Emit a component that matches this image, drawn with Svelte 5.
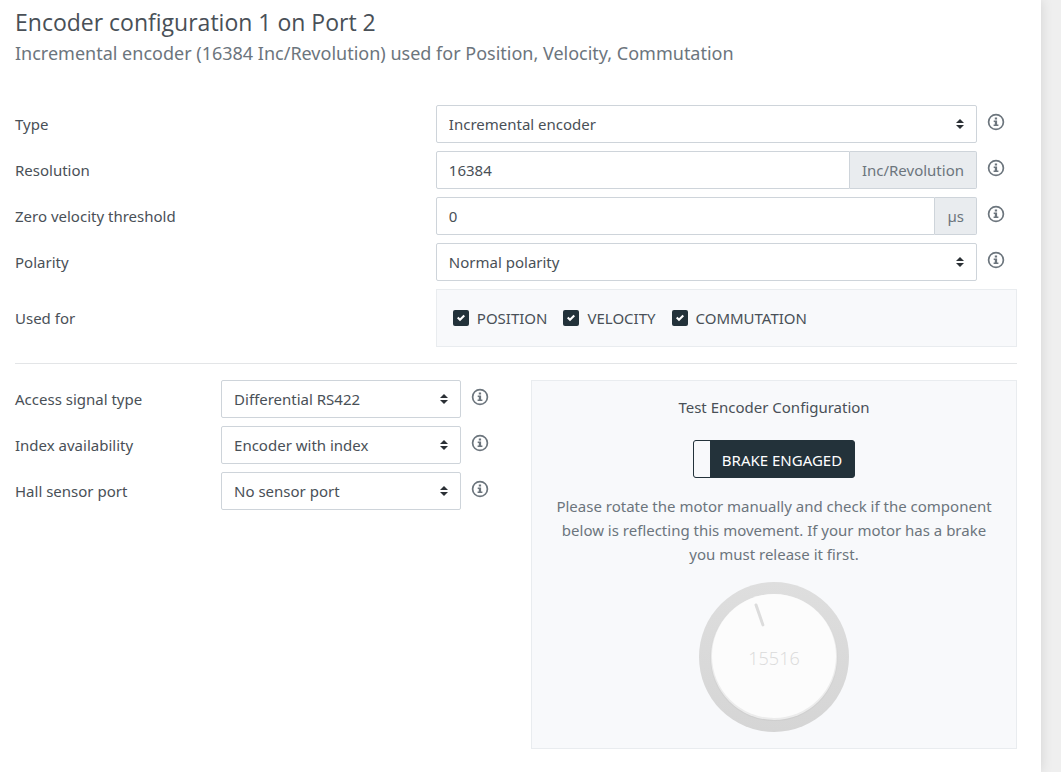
<script>
  const mainFields = [
    { id: 'type', label: 'Type', kind: 'select', value: 'Incremental encoder' },
    { id: 'resolution', label: 'Resolution', kind: 'input', value: '16384', unit: 'Inc/Revolution' },
    { id: 'threshold', label: 'Zero velocity threshold', kind: 'input', value: '0', unit: 'µs' },
    { id: 'polarity', label: 'Polarity', kind: 'select', value: 'Normal polarity' }
  ];
  const signalFields = [
    { id: 'access', label: 'Access signal type', value: 'Differential RS422' },
    { id: 'index', label: 'Index availability', value: 'Encoder with index' },
    { id: 'hall', label: 'Hall sensor port', value: 'No sensor port' }
  ];
  const uses = ['POSITION', 'VELOCITY', 'COMMUTATION'];
  const position = 15516;
  const resolution = 16384;
  const angle = (position / resolution) * 360;
</script>

{#snippet info(label)}
  <button type="button" class="info" aria-label={'About ' + label}>
    <svg viewBox="0 0 18 18" width="18" height="18" fill="none">
      <circle cx="9" cy="9" r="7.4" stroke="currentColor" stroke-width="1.7" />
      <path d="M7.8 4.4h2.3v2.1H7.8zM6.7 7.4h3.4v4.2h1.3v1.5H6.6v-1.5h1.2V8.9H6.7z" fill="currentColor" />
    </svg>
  </button>
{/snippet}

{#snippet dropdown(field)}
  <span class="select">
    <select id={field.id}>
      <option>{field.value}</option>
    </select>
    <svg class="arrows" viewBox="0 0 8 10" width="8" height="10" fill="#2b3035" aria-hidden="true">
      <path d="M0 4 4 0l4 4zM0 6h8l-4 4z" />
    </svg>
  </span>
{/snippet}

<main>
  <header>
    <h1>Encoder configuration 1 on Port 2</h1>
    <p>Incremental encoder (16384 Inc/Revolution) used for Position, Velocity, Commutation</p>
  </header>

  <section class="fields">
    {#each mainFields as field}
      <div class="row">
        <label for={field.id}>{field.label}</label>
        <div class="control">
          {#if field.kind === 'select'}
            {@render dropdown(field)}
          {:else}
            <span class="group">
              <input id={field.id} type="text" value={field.value} />
              <span class="unit">{field.unit}</span>
            </span>
          {/if}
          {@render info(field.label)}
        </div>
      </div>
    {/each}
    <div class="row">
      <span id="used">Used for</span>
      <div class="uses" role="group" aria-labelledby="used">
        {#each uses as use}
          <label class="check">
            <span class="box">
              <input type="checkbox" checked />
              <svg viewBox="0 0 8 8" width="8" height="8" aria-hidden="true">
                <path fill="#fff" d="M6.564.75l-3.59 3.612-1.538-1.55L0 4.26l2.974 2.99L8 2.193z" />
              </svg>
            </span>
            {use}
          </label>
        {/each}
      </div>
    </div>
  </section>

  <hr />

  <div class="lower">
    <section class="fields">
      {#each signalFields as field}
        <div class="row signal">
          <label for={field.id}>{field.label}</label>
          <div class="control">
            {@render dropdown(field)}
            {@render info(field.label)}
          </div>
        </div>
      {/each}
    </section>

    <section class="test">
      <h2>Test Encoder Configuration</h2>
      <button type="button" class="brake"><span class="handle"></span><span class="state">BRAKE ENGAGED</span></button>
      <p>
        Please rotate the motor manually and check if the component below is reflecting this
        movement. If your motor has a brake you must release it first.
      </p>
      <svg class="dial" viewBox="0 0 150 150" width="150" height="150" role="img" aria-label="Encoder position">
        <defs>
          <linearGradient id="rim" x1="0" y1="0" x2="0" y2="1">
            <stop offset="0" stop-color="#dedede" />
            <stop offset="1" stop-color="#d5d5d5" />
          </linearGradient>
          <linearGradient id="edge" x1="0" y1="0" x2="0" y2="1">
            <stop offset="0" stop-color="#dedede" />
            <stop offset="1" stop-color="#cecece" />
          </linearGradient>
        </defs>
        <circle cx="75" cy="75" r="75" fill="url(#rim)" />
        <circle cx="75" cy="75" r="64" fill="url(#edge)" />
        <circle cx="75" cy="75" r="63" fill="#ececec" />
        <circle cx="75" cy="74" r="62" fill="#fcfcfc" />
        <path d="M75 20v21" stroke="#dcdcdc" stroke-width="3" stroke-linecap="round" transform={`rotate(${angle} 75 75)`} />
        <text x="75" y="83" text-anchor="middle">{position}</text>
      </svg>
    </section>
  </div>
</main>

<style>
  :global(body) {
    margin: 0;
    background: #efefef;
  }

  main {
    box-sizing: border-box;
    min-height: 100vh;
    margin-right: 20px;
    padding: 7px 24px 23px 15px;
    background: #fff;
    box-shadow: 0 0 12px rgba(0, 0, 0, 0.12);
    color: #495057;
    font: 15px/24px 'Noto Sans', sans-serif;
  }

  h1,
  h2,
  p {
    margin: 0;
    font-weight: 400;
  }

  h1 {
    font-family: 'Open Sans', 'Noto Sans', sans-serif;
    font-size: 23px;
    line-height: 30px;
  }

  header p {
    color: #6c757d;
    font-size: 18px;
    line-height: 32px;
  }

  header {
    margin-bottom: 36px;
  }

  .fields {
    display: flex;
    flex-direction: column;
    gap: 8px;
  }

  .row {
    display: grid;
    grid-template-columns: 42% 1fr;
    align-items: center;
  }

  .signal {
    grid-template-columns: 42.4% 1fr;
  }

  .control {
    display: flex;
    gap: 10px;
  }

  .select,
  .group {
    display: flex;
    flex: 1;
    min-width: 0;
    position: relative;
  }

  select,
  .group input {
    box-sizing: border-box;
    flex: 1;
    width: 100%;
    min-width: 0;
    height: 38px;
    padding: 0 12px;
    border: 1px solid #ced4da;
    border-radius: 2px;
    background: #fff;
    color: #495057;
    font: inherit;
    appearance: none;
  }

  .group input {
    border-radius: 2px 0 0 2px;
  }

  .arrows {
    position: absolute;
    top: 14px;
    right: 13px;
    pointer-events: none;
  }

  .unit {
    display: flex;
    align-items: center;
    padding: 0 12px;
    border: 1px solid #ced4da;
    border-left: 0;
    border-radius: 0 2px 2px 0;
    background: #e9ecef;
    color: #6c757d;
  }

  .info {
    display: flex;
    align-items: center;
    width: 30px;
    height: 34px;
    padding: 0;
    border: 0;
    background: none;
    color: #6c757d;
  }

  .uses {
    display: flex;
    flex-wrap: wrap;
    gap: 16px;
    padding: 16px;
    border: 1px solid #e9ecef;
    background: #f8f9fb;
  }

  .check {
    display: flex;
    align-items: center;
    gap: 8px;
  }

  .box {
    display: grid;
    place-items: center;
  }

  .box > * {
    grid-area: 1 / 1;
  }

  .box input {
    width: 16px;
    height: 16px;
    margin: 0;
    border-radius: 2px;
    appearance: none;
  }

  .box input:checked {
    background: #23323a;
  }

  .box svg {
    pointer-events: none;
  }

  hr {
    margin: 16px 0;
    border: 0;
    border-top: 1px solid #e3e5e7;
  }

  .lower {
    display: grid;
    grid-template-columns: 1fr 1fr;
    gap: 30px;
  }

  .test {
    display: flex;
    flex-direction: column;
    align-items: center;
    padding: 14px 16px 16px;
    border: 1px solid #e9ecef;
    background: #f8f9fb;
    text-align: center;
  }

  .test h2 {
    font-size: 15px;
    line-height: 24px;
  }

  .brake {
    display: flex;
    height: 38px;
    margin: 21px 0 16px;
    padding: 0;
    overflow: hidden;
    border: 1px solid #23323a;
    border-radius: 3px;
    background: #23323a;
    color: #fff;
    font: inherit;
  }

  .handle {
    width: 16px;
    height: 36px;
    background: #f8f9fb;
  }

  .state {
    padding: 0 12px;
    line-height: 38px;
  }

  .test p {
    color: #6c757d;
  }

  .dial {
    margin-top: 16px;
  }

  .dial text {
    fill: #dadada;
    font: 300 18px 'Open Sans', sans-serif;
  }
</style>
